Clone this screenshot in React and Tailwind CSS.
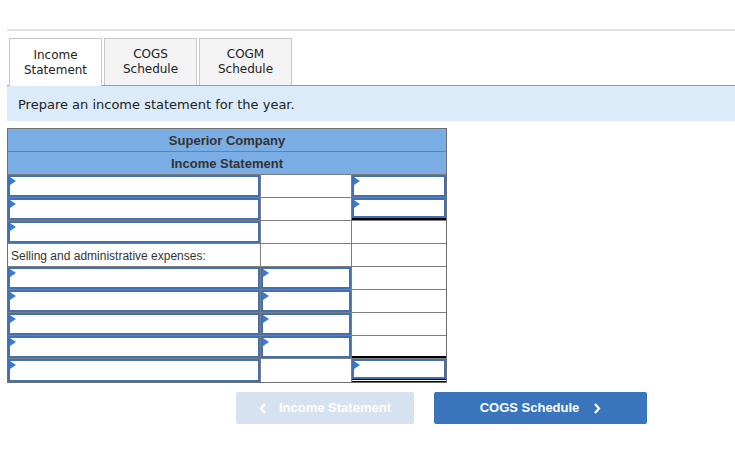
import React from "react";

function Tri() {
  return (
    <svg className="absolute left-0 top-0" width="6" height="9" viewBox="0 0 6 9">
      <polygon points="0,0 6,4 0,8" fill="#3a7bd5" />
    </svg>
  );
}

function Inp() {
  return (
    <div className="relative h-full w-full border-2 border-[#4170b3] bg-white">
      <Tri />
    </div>
  );
}

const rows = [
  { c1: "in", c2: "", c3: "in" },
  { c1: "in", c2: "", c3: "in", c3under: true },
  { c1: "in", c2: "", c3: "" },
  { c1: "text", c2: "", c3: "" },
  { c1: "in", c2: "in", c3: "" },
  { c1: "in", c2: "in", c3: "" },
  { c1: "in", c2: "in", c3: "" },
  { c1: "in", c2: "in", c3: "", c3under: true },
  { c1: "in", c2: "", c3: "in", c3double: true },
];

export default function App() {
  return (
    <div className="w-[735px] h-[456px] bg-white" style={{ fontFamily: "'DejaVu Sans', Verdana, sans-serif" }}>
      <div className="pl-[7px] pt-[29px]">
        <div className="h-[2px] bg-[#e2e2e2]" />
        <div className="mt-[7px] flex items-end gap-[2px] border-b border-[#9a9a9a] pl-[2px]">
          {[
            ["Income", "Statement", true],
            ["COGS", "Schedule", false],
            ["COGM", "Schedule", false],
          ].map(([a, b, active]) => (
            <div
              key={a}
              className={
                "flex w-[93px] flex-col items-center justify-center border border-[#c8c8c8] text-[12px] leading-[15px] text-[#222] " +
                (active ? "relative -mb-px h-[48px] border-b-0 bg-white" : "h-[47px] border-b-0 bg-[#f3f3f3]")
              }
            >
              <span>{a}</span>
              <span>{b}</span>
            </div>
          ))}
        </div>
        <div className="flex h-[35px] items-center bg-[#dbebf9] pl-[11px] pt-[2px] text-[13px] text-[#222]">
          Prepare an income statement for the year.
        </div>
        <div
          className="mt-[7px] flex w-[440px] flex-col border border-[#6f6f6f]"
          style={{ fontFamily: "'Liberation Sans', Arial, sans-serif" }}
        >
          <div className="flex h-[23px] items-center justify-center border-b border-[#7d7d7d] bg-[#7aade4] pt-[1px] text-[13px] font-bold text-[#333]">
            Superior Company
          </div>
          <div className="flex h-[23px] items-center justify-center border-b border-[#7d7d7d] bg-[#7aade4] pt-[1px] text-[13px] font-bold text-[#333]">
            Income Statement
          </div>
          {rows.map((r, i) => (
            <div key={i} className={"flex h-[23px] " + (i < rows.length - 1 ? "border-b border-[#7d7d7d]" : "")}>
              <div className="h-full w-[253px] border-r border-[#7d7d7d]">
                {r.c1 === "in" ? (
                  <Inp />
                ) : (
                  <div className="pl-[3px] pt-[5px] text-[12px] leading-[14px] text-[#333]">
                    Selling and administrative expenses:
                  </div>
                )}
              </div>
              <div className="h-full w-[91px] border-r border-[#7d7d7d]">{r.c2 === "in" ? <Inp /> : null}</div>
              <div
                className={
                  "h-full flex-1 " +
                  (r.c3under ? "border-b-2 border-black " : "") +
                  (r.c3double ? "border-b-[3px] border-double border-black" : "")
                }
              >
                {r.c3 === "in" ? <Inp /> : null}
              </div>
            </div>
          ))}
        </div>
        <div
          className="mt-[9px] flex gap-[20px] pl-[229px] text-[13px] font-bold text-white"
          style={{ fontFamily: "'Liberation Sans', Arial, sans-serif" }}
        >
          <div className="flex h-[32px] w-[178px] items-center justify-center gap-[12px] rounded-[2px] bg-[#d6e2f0]">
            <svg width="8" height="11" viewBox="0 0 8 11">
              <polyline points="6,1 2,5.5 6,10" fill="none" stroke="white" strokeWidth="2.2" />
            </svg>
            <span>Income Statement</span>
          </div>
          <div className="flex h-[32px] w-[213px] items-center justify-center gap-[14px] rounded-[2px] bg-[#3a74ba]">
            <span>COGS Schedule</span>
            <svg width="8" height="11" viewBox="0 0 8 11">
              <polyline points="2,1 6,5.5 2,10" fill="none" stroke="white" strokeWidth="2.2" />
            </svg>
          </div>
        </div>
      </div>
    </div>
  );
}
